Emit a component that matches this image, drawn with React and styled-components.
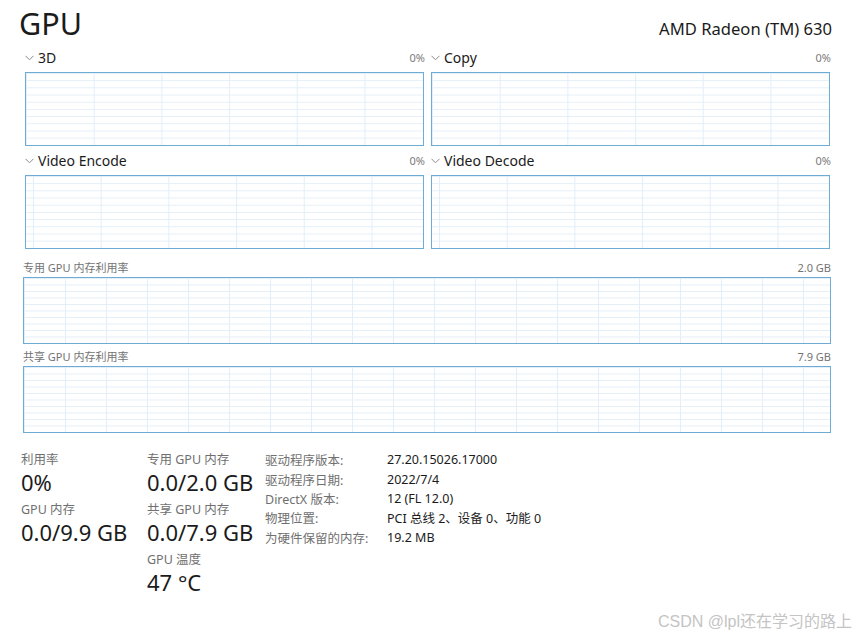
import styled, { createGlobalStyle } from 'styled-components'

const GlobalStyle = createGlobalStyle`
  html, body {
    margin: 0;
    padding: 0;
    background: #ffffff;
  }
  body {
    font-family: 'Noto Sans', 'Noto Sans CJK SC', sans-serif;
    color: #1b1b1b;
  }
`

const Page = styled.div`
  position: relative;
  width: 855px;
  height: 638px;
  overflow: hidden;
  background: #fff;
`

const Header = styled.div`
  display: flex;
  justify-content: space-between;
  align-items: baseline;
  padding: 3px 23px 0 19px;
  height: 40px;
`

const Title = styled.h1`
  margin: 0;
  font-size: 30.5px;
  font-weight: 400;
  line-height: 40px;
`

const DeviceName = styled.div`
  font-size: 16.6px;
  line-height: 24px;
`

const EngineGrid = styled.div`
  display: grid;
  grid-template-columns: 399px 399px;
  column-gap: 7px;
  padding-left: 25px;
`

const Engine = styled.div`
  display: flex;
  flex-direction: column;
`

const EngineHead = styled.div`
  display: flex;
  align-items: center;
  height: 29px;
`

const Chevron = styled.svg`
  width: 9px;
  height: 6px;
  margin: 0 4px 0 0;
  flex-shrink: 0;
`

const EngineName = styled.span`
  font-size: 14px;
  flex: 1;
`

const Percent = styled.span`
  font-size: 11px;
  color: #7a7a7a;
  margin-right: -1px;
`

const Chart = styled.div`
  box-sizing: border-box;
  height: ${p => p.$height}px;
  border: 1.5px solid #6eabd5;
  background-color: #fff;
  background-image:
    linear-gradient(to right, #e3eef8 1px, transparent 1px),
    linear-gradient(to bottom, #e3eef8 1px, transparent 1px);
  background-size: ${p => p.$cell}px 100%, 100% 10%;
  background-position: ${p => p.$offset}px 0, 0 0;
`

const Memory = styled.div`
  display: flex;
  flex-direction: column;
  padding: 8px 24px 0 23px;
`

const MemHead = styled.div`
  display: flex;
  justify-content: space-between;
  align-items: center;
  height: 20px;
  margin-top: ${p => p.$gap || 0}px;
  font-size: 11px;
  color: #737373;
`

const Bottom = styled.div`
  display: flex;
  align-items: flex-start;
  padding: 18px 0 0 21px;
`

const StatColumn = styled.div`
  display: flex;
  flex-direction: column;
  gap: 4px;
  width: ${p => p.$width}px;
`

const Stat = styled.div`
  display: flex;
  flex-direction: column;
`

const StatLabel = styled.div`
  font-size: 12.5px;
  line-height: 17px;
  color: #6f6f6f;
`

const StatValue = styled.div`
  font-size: 22px;
  line-height: 29px;
`

const Info = styled.div`
  display: grid;
  grid-template-columns: 122px auto;
  grid-auto-rows: 19.4px;
  align-items: center;
  font-size: 12.5px;
  margin-top: -1px;
`

const InfoLabel = styled.div`
  color: #707070;
`

const InfoValue = styled.div`
  color: #1b1b1b;
`

const Watermark = styled.div`
  position: absolute;
  right: 3px;
  bottom: 6px;
  font-size: 16px;
  color: #c4c4c4;
  font-family: 'Liberation Sans', 'Noto Sans CJK SC', sans-serif;
`

const engines = [
  { name: '3D', offset: 0 },
  { name: 'Copy', offset: 0 },
  { name: 'Video Encode', offset: 7 },
  { name: 'Video Decode', offset: 7 },
]

const info = [
  ['驱动程序版本:', '27.20.15026.17000'],
  ['驱动程序日期:', '2022/7/4'],
  ['DirectX 版本:', '12 (FL 12.0)'],
  ['物理位置:', 'PCI 总线 2、设备 0、功能 0'],
  ['为硬件保留的内存:', '19.2 MB'],
]

function App() {
  return (
    <Page>
      <GlobalStyle />
      <Header>
        <Title>GPU</Title>
        <DeviceName>AMD Radeon (TM) 630</DeviceName>
      </Header>

      <EngineGrid>
        {engines.map(e => (
          <Engine key={e.name}>
            <EngineHead>
              <Chevron viewBox="0 0 9 6">
                <polyline points="0.5,0.8 4.5,4.8 8.5,0.8" fill="none" stroke="#8a8a8a" strokeWidth="1" />
              </Chevron>
              <EngineName>{e.name}</EngineName>
              <Percent>0%</Percent>
            </EngineHead>
            <Chart $height={74} $cell={67.7} $offset={e.offset} />
          </Engine>
        ))}
      </EngineGrid>

      <Memory>
        <MemHead>
          <span>专用 GPU 内存利用率</span>
          <span>2.0 GB</span>
        </MemHead>
        <Chart $height={67} $cell={41} $offset={0} />
        <MemHead $gap={2}>
          <span>共享 GPU 内存利用率</span>
          <span>7.9 GB</span>
        </MemHead>
        <Chart $height={67} $cell={41} $offset={0} />
      </Memory>

      <Bottom>
        <StatColumn $width={126}>
          <Stat>
            <StatLabel>利用率</StatLabel>
            <StatValue>0%</StatValue>
          </Stat>
          <Stat>
            <StatLabel>GPU 内存</StatLabel>
            <StatValue>0.0/9.9 GB</StatValue>
          </Stat>
        </StatColumn>
        <StatColumn $width={118}>
          <Stat>
            <StatLabel>专用 GPU 内存</StatLabel>
            <StatValue>0.0/2.0 GB</StatValue>
          </Stat>
          <Stat>
            <StatLabel>共享 GPU 内存</StatLabel>
            <StatValue>0.0/7.9 GB</StatValue>
          </Stat>
          <Stat>
            <StatLabel>GPU 温度</StatLabel>
            <StatValue>47 °C</StatValue>
          </Stat>
        </StatColumn>
        <Info>
          {info.map(([k, v]) => (
            <>
              <InfoLabel key={k}>{k}</InfoLabel>
              <InfoValue key={k + 'v'}>{v}</InfoValue>
            </>
          ))}
        </Info>
      </Bottom>

      <Watermark>CSDN @lpl还在学习的路上</Watermark>
    </Page>
  )
}

export default App
